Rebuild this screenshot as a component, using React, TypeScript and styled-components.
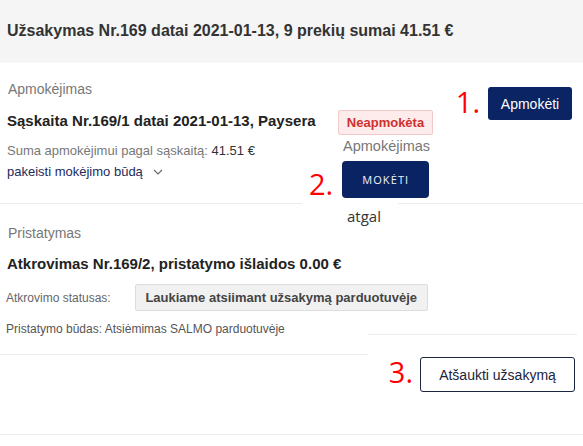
import styled, { createGlobalStyle } from "styled-components";

const GlobalStyle = createGlobalStyle`
  body {
    margin: 0;
    background: #fff;
    font-family: "Liberation Sans", Arial, sans-serif;
    color: #333;
  }
`;

const Page = styled.div`
  width: 583px;
  height: 446px;
  position: relative;
  overflow: hidden;
`;

const Header = styled.div`
  height: 62px;
  background: #f5f5f5;
  display: flex;
  align-items: center;
  padding-left: 7px;
  font-size: 16px;
  font-weight: bold;
  color: #333;
`;

const PaymentSection = styled.div`
  display: flex;
  height: 140px;
  padding: 0 11px 0 7px;
  border-top: 1px solid #f9f9f9;
  border-bottom: 1px solid #ececec;
`;

const Info = styled.div`
  flex: 0 0 331px;
  padding-top: 18px;
`;

const Label = styled.div<{ $gap?: number }>`
  font-size: 14px;
  color: #777;
  padding-left: 1px;
  margin-bottom: ${(p) => p.$gap ?? 15}px;
`;

const Title = styled.div<{ $gap?: number }>`
  font-size: 15px;
  font-weight: bold;
  color: #222;
  margin-bottom: ${(p) => p.$gap ?? 14}px;
`;

const Small = styled.div<{ $dark?: boolean }>`
  font-size: 13px;
  color: ${(p) => (p.$dark ? "#1d2b5a" : "#777")};
  margin-bottom: 6px;
  display: flex;
  align-items: center;
  gap: 10px;

  b {
    font-weight: normal;
    color: #333;
  }
`;

const BadgeCol = styled.div`
  padding-top: 47px;
`;

const Badge = styled.div`
  width: 95px;
  height: 25px;
  box-sizing: border-box;
  background: #fdeceb;
  border: 1px solid #f3c9c7;
  border-radius: 2px;
  color: #d0302f;
  font-size: 13px;
  font-weight: bold;
  display: flex;
  align-items: center;
  justify-content: center;
`;

const Actions = styled.div`
  margin-left: auto;
  padding-top: 24px;
  display: flex;
  align-items: flex-start;
  gap: 8px;
`;

const Mark = styled.span`
  font-family: "Open Sans", "Liberation Sans", sans-serif;
  font-size: 29px;
  line-height: 1;
  color: #ff0000;
`;

const PrimaryButton = styled.button`
  width: 84px;
  height: 33px;
  background: #0b2463;
  color: #fff;
  border: none;
  border-radius: 3px;
  font-family: "Liberation Sans", Arial, sans-serif;
  font-size: 14px;
  padding: 0;
`;

const Popup = styled.div`
  position: absolute;
  left: 302px;
  top: 137px;
  width: 96px;
  height: 92px;
  background: #fff;
`;

const PopupLabel = styled.div`
  margin: 1px 0 0 41px;
  font-size: 14.5px;
  color: #777;
  white-space: nowrap;
`;

const PopupRow = styled.div`
  display: flex;
  align-items: flex-end;
  gap: 9px;
  margin-top: 7px;
  padding-left: 7px;
`;

const PayButton = styled.button`
  flex: 0 0 87px;
  height: 37px;
  background: #0a2463;
  color: #eef2fa;
  border: none;
  border-radius: 4px;
  font-family: "Open Sans", sans-serif;
  font-size: 11px;
  font-weight: 500;
  letter-spacing: 1.1px;
  padding: 0;
`;

const Back = styled.div`
  margin: 8px 0 0 45px;
  font-family: "Open Sans", sans-serif;
  font-size: 15px;
  color: #333;
`;

const Lower = styled.div`
  display: grid;
  grid-template-columns: 368px 1fr;
  height: 230px;
  border-bottom: 1px solid #ececec;
`;

const Delivery = styled.div`
  height: 151px;
  padding: 21px 0 0 7px;
  box-sizing: border-box;
  border-bottom: 1px solid #ececec;
  white-space: nowrap;
`;

const StatusRow = styled.div`
  display: flex;
  align-items: center;
  gap: 24px;
  margin: 1px 0 11px -1px;
`;

const StatusLabel = styled.span`
  font-size: 12px;
  color: #666;
`;

const StatusBox = styled.div`
  flex: 0 0 293px;
  height: 27px;
  box-sizing: border-box;
  background: #f1f1f1;
  border: 1px solid #dcdcdc;
  border-radius: 2px;
  font-size: 13px;
  font-weight: bold;
  color: #444;
  display: flex;
  align-items: center;
  justify-content: center;
`;

const Note = styled.div`
  font-size: 12px;
  color: #555;
  margin-left: -1px;
`;

const RightCol = styled.div`
  margin-right: 6px;
`;

const RightSpacer = styled.div`
  height: 130px;
  border-bottom: 1px solid #ececec;
`;

const CancelRow = styled.div`
  display: flex;
  justify-content: flex-end;
  align-items: flex-start;
  gap: 7px;
  padding-top: 22px;
  margin-right: 2px;
`;

const OutlineButton = styled.button`
  width: 155px;
  height: 35px;
  background: #fff;
  border: 1px solid #1a2540;
  border-radius: 3px;
  color: #1a2540;
  font-family: "Liberation Sans", Arial, sans-serif;
  font-size: 14px;
  padding: 0;
`;

const Chevron = () => (
  <svg width="10" height="6" viewBox="0 0 10 6" fill="none">
    <path d="M1 1l4 4 4-4" stroke="#666" strokeWidth="1.1" />
  </svg>
);

export default function App() {
  return (
    <Page>
      <GlobalStyle />
      <Header>Užsakymas Nr.169 datai 2021-01-13, 9 prekių sumai 41.51 €</Header>

      <PaymentSection>
        <Info>
          <Label>Apmokėjimas</Label>
          <Title>Sąskaita Nr.169/1 datai 2021-01-13, Paysera</Title>
          <Small>
            <span>
              Suma apmokėjimui pagal sąskaitą: <b>41.51 €</b>
            </span>
          </Small>
          <Small $dark>
            pakeisti mokėjimo būdą <Chevron />
          </Small>
        </Info>
        <BadgeCol>
          <Badge>Neapmokėta</Badge>
        </BadgeCol>
        <Actions>
          <Mark>1.</Mark>
          <PrimaryButton>Apmokėti</PrimaryButton>
        </Actions>
      </PaymentSection>

      <Popup>
        <PopupLabel>Apmokėjimas</PopupLabel>
        <PopupRow>
          <Mark>2.</Mark>
          <PayButton>MOKĖTI</PayButton>
        </PopupRow>
        <Back>atgal</Back>
      </Popup>

      <Lower>
        <Delivery>
          <Label $gap={14}>Pristatymas</Label>
          <Title $gap={12}>Atkrovimas Nr.169/2, pristatymo išlaidos 0.00 €</Title>
          <StatusRow>
            <StatusLabel>Atkrovimo statusas:</StatusLabel>
            <StatusBox>Laukiame atsiimant užsakymą parduotuvėje</StatusBox>
          </StatusRow>
          <Note>Pristatymo būdas: Atsiėmimas SALMO parduotuvėje</Note>
        </Delivery>
        <RightCol>
          <RightSpacer />
          <CancelRow>
            <Mark>3.</Mark>
            <OutlineButton>Atšaukti užsakymą</OutlineButton>
          </CancelRow>
        </RightCol>
      </Lower>
    </Page>
  );
}
